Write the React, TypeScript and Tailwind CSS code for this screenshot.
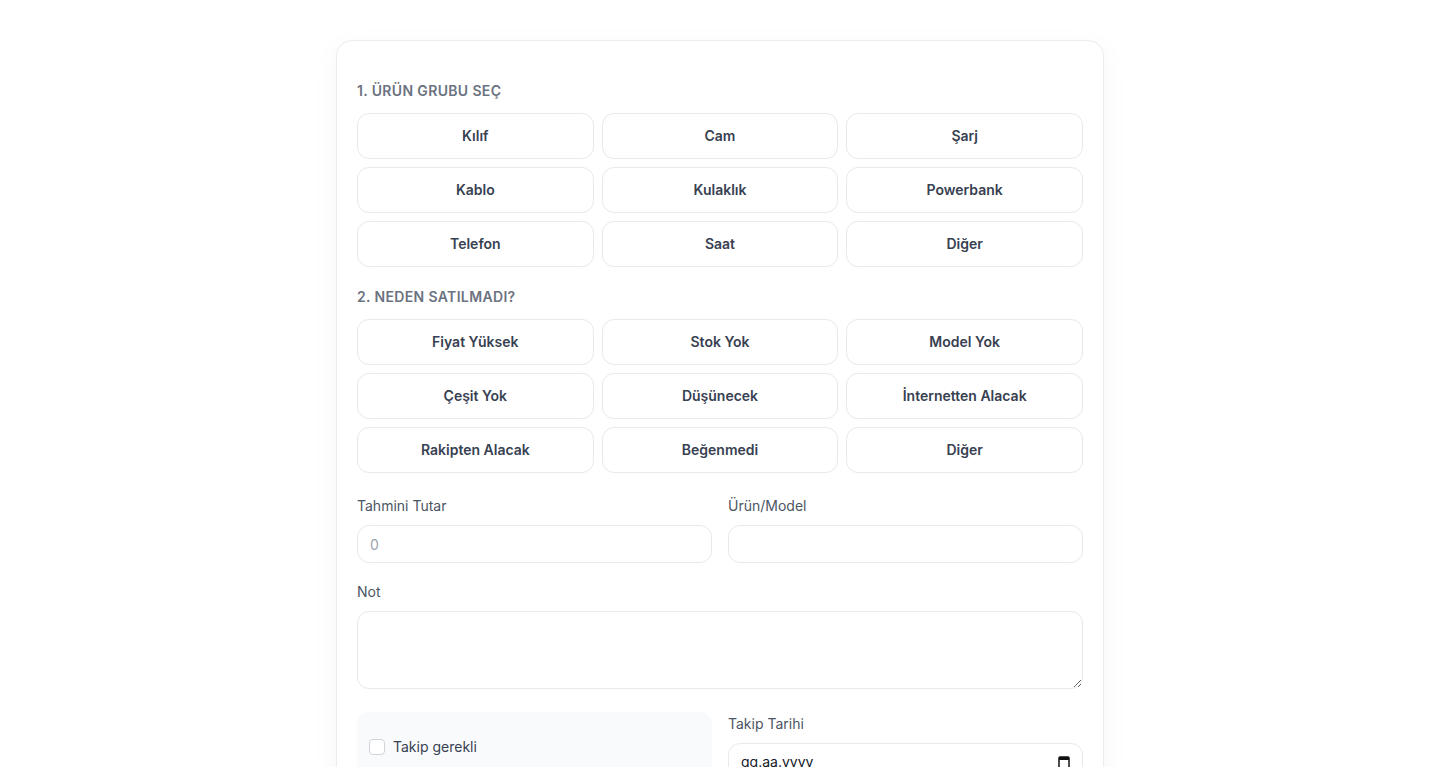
import React, { useState } from 'react';

const groups = ['Kılıf', 'Cam', 'Şarj', 'Kablo', 'Kulaklık', 'Powerbank', 'Telefon', 'Saat', 'Diğer'];
const reasons = [
  'Fiyat Yüksek',
  'Stok Yok',
  'Model Yok',
  'Çeşit Yok',
  'Düşünecek',
  'İnternetten Alacak',
  'Rakipten Alacak',
  'Beğenmedi',
  'Diğer',
];

function OptionGrid({ items, selected, onSelect }: { items: string[]; selected: string; onSelect: (v: string) => void }) {
  return (
    <div className="grid grid-cols-3 gap-2">
      {items.map((item) => (
        <button
          key={item}
          type="button"
          onClick={() => onSelect(item)}
          className={
            selected === item
              ? 'h-[46px] rounded-xl border border-blue-500 bg-blue-50 text-sm font-semibold text-blue-700'
              : 'h-[46px] rounded-xl border border-[#e8e9ec] bg-white text-sm font-semibold text-[#374151]'
          }
        >
          {item}
        </button>
      ))}
    </div>
  );
}

export default function App() {
  const [group, setGroup] = useState('');
  const [reason, setReason] = useState('');

  return (
    <div className="min-h-screen bg-white pt-10 pb-10" style={{ fontFamily: 'Inter, "Noto Sans", sans-serif' }}>
      <div className="mx-auto max-w-3xl rounded-2xl border border-[#ececef] bg-white px-5 pt-10 pb-6 shadow-[0_8px_30px_rgba(15,23,42,0.04)]">
        {/* 1. Ürün grubu */}
        <h2 className="mb-3 text-sm font-semibold uppercase leading-5 tracking-wide text-[#6b7280]">1. Ürün grubu seç</h2>
        <OptionGrid items={groups} selected={group} onSelect={setGroup} />

        {/* 2. Neden satılmadı */}
        <h2 className="mt-5 mb-3 text-sm font-semibold leading-5 tracking-wide text-[#6b7280]">2. NEDEN SATILMADI?</h2>
        <OptionGrid items={reasons} selected={reason} onSelect={setReason} />

        <div className="mt-[23px] grid grid-cols-2 gap-4">
          <div>
            <label className="mb-[9px] block text-sm leading-5 text-[#4b5563]">Tahmini Tutar</label>
            <input
              type="text"
              placeholder="0"
              className="block h-[38px] w-full rounded-xl border border-[#e8e9ec] px-3 text-sm text-gray-800 outline-none placeholder:text-[#9ca3af]"
            />
          </div>
          <div>
            <label className="mb-[9px] block text-sm leading-5 text-[#4b5563]">Ürün/Model</label>
            <input
              type="text"
              className="block h-[38px] w-full rounded-xl border border-[#e8e9ec] px-3 text-sm text-gray-800 outline-none"
            />
          </div>
        </div>

        <div className="mt-[19px]">
          <label className="mb-[9px] block text-sm leading-5 text-[#4b5563]">Not</label>
          <textarea
            rows={3}
            className="block h-[78px] w-full rounded-xl border border-[#e8e9ec] px-3 py-2 text-sm leading-5 text-gray-800 outline-none"
          />
        </div>

        <div className="mt-[23px] grid grid-cols-2 gap-4">
          <div className="flex items-center gap-2 rounded-xl bg-[#f8fafc] px-3 py-3">
            <span className="h-4 w-4 rounded border border-[#d1d5db] bg-white" />
            <span className="text-sm leading-5 text-[#374151]">Takip gerekli</span>
          </div>
          <div className="pt-0.5">
            <label className="mb-[9px] block text-sm leading-5 text-[#4b5563]">Takip Tarihi</label>
            <div className="flex h-[38px] w-full items-center justify-between rounded-xl border border-[#e8e9ec] px-3 text-sm text-[#111827]">
              <span>gg.aa.yyyy</span>
              <svg width="12" height="14" viewBox="0 0 12 14" fill="none">
                <rect x="1" y="2" width="10" height="11" rx="1" stroke="#111" strokeWidth="1.5" />
                <rect x="1" y="2" width="10" height="3" fill="#111" />
              </svg>
            </div>
          </div>
        </div>
      </div>
    </div>
  );
}
